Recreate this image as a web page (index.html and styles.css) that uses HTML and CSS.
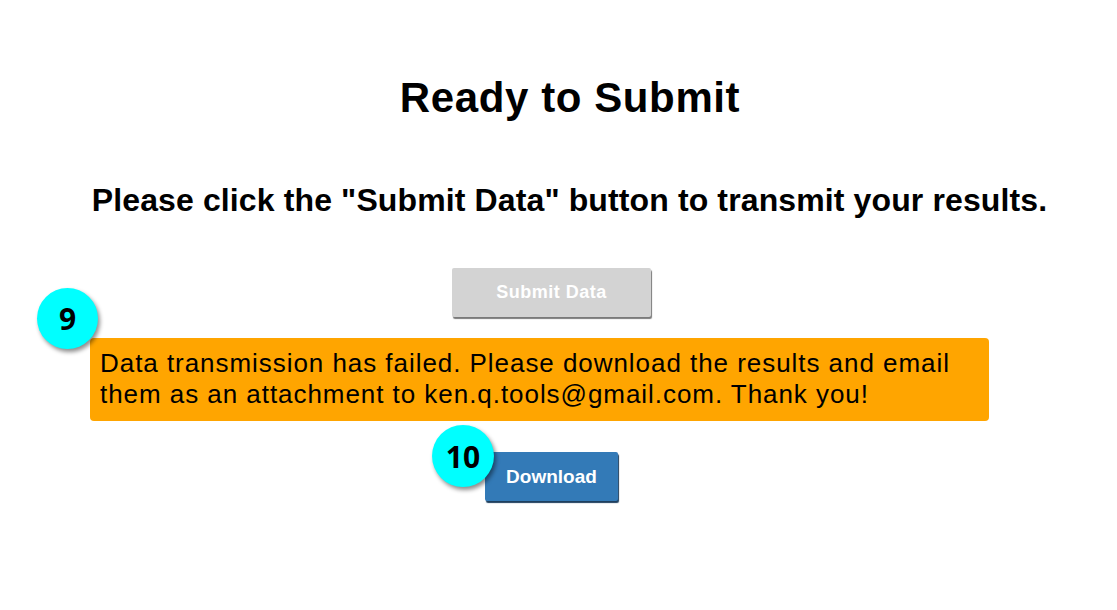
FILE: index.html
```html
<!DOCTYPE html>
<html>
<head>
<meta charset="utf-8">
<link rel="stylesheet" href="styles.css">
</head>
<body>
<main class="page">
  <h1 class="title">Ready to Submit</h1>
  <h2 class="subtitle">Please click the "Submit Data" button to transmit your results.</h2>
  <div class="submit-row">
    <button class="btn btn-submit" disabled>Submit Data</button>
  </div>
  <div class="alert-wrap">
    <span class="badge badge-9">9</span>
    <div class="alert">Data transmission has failed. Please download the results and email them as an attachment to ken.q.tools@gmail.com. Thank you!</div>
  </div>
  <div class="download-row">
    <span class="badge badge-10">10</span>
    <button class="btn btn-download">Download</button>
  </div>
</main>
</body>
</html>
```

FILE: styles.css
```css
html, body {
  margin: 0;
  padding: 0;
  background: #ffffff;
}
body {
  font-family: "Liberation Sans", Arial, sans-serif;
  color: #000;
}
.page {
  width: 1117px;
  height: 610px;
  display: flex;
  flex-direction: column;
}
.title {
  margin: 74px 0 0 0;
  font-size: 42px;
  line-height: 48px;
  font-weight: bold;
  letter-spacing: 0.6px;
  text-align: center;
  padding-left: 23px;
}
.subtitle {
  margin: 60px 0 0 0;
  font-size: 32px;
  line-height: 36px;
  font-weight: bold;
  letter-spacing: 0.12px;
  text-align: center;
  padding-left: 22px;
}
.submit-row {
  display: flex;
  padding-left: 452px;
  margin-top: 50px;
}
.btn {
  font-family: "Liberation Sans", Arial, sans-serif;
  font-weight: bold;
  color: #fff;
  border: none;
  border-radius: 2px;
  padding: 0;
}
.btn-submit {
  width: 199px;
  height: 49px;
  background: #d3d3d3;
  font-size: 18px;
  letter-spacing: 0.5px;
  box-shadow: 1px 2px 1px #7a7a7a;
}
.alert-wrap {
  position: relative;
  margin: 21px 0 0 90px;
  width: 899px;
}
.alert {
  background: #ffa500;
  border-radius: 4px;
  font-size: 26px;
  line-height: 31px;
  letter-spacing: 0.95px;
  padding: 10px 10px 11px 10px;
  color: #000;
}
.badge {
  position: absolute;
  width: 61px;
  height: 61px;
  border-radius: 50%;
  background: #00ffff;
  box-shadow: 2px 3px 4px rgba(0,0,0,0.45);
  display: flex;
  align-items: center;
  justify-content: center;
  font-family: "Open Sans", "Noto Sans", sans-serif;
  font-weight: bold;
  font-size: 30px;
  color: #000;
}
.badge-9 {
  left: -53px;
  top: -50px;
}
.download-row {
  position: relative;
  display: flex;
  padding-left: 485px;
  margin-top: 31px;
}
.badge-10 {
  left: 432px;
  top: -27px;
  width: 62px;
  height: 62px;
}
.btn-download {
  width: 133px;
  height: 49px;
  background: #337ab7;
  font-size: 19px;
  box-shadow: 1px 2px 1px #1e3f5e;
}
```
